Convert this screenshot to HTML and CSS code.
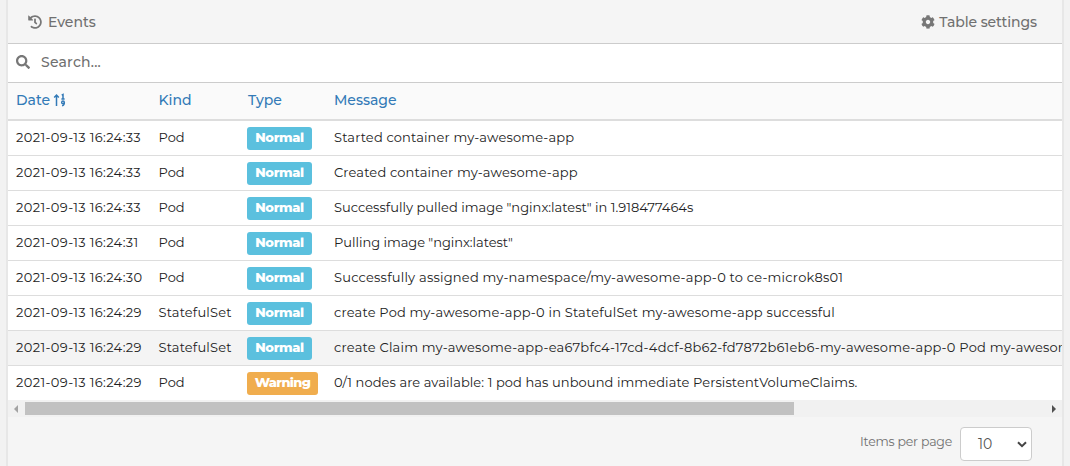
FILE: index.html
```html
<!DOCTYPE html>
<html lang="en">
<head>
<meta charset="utf-8">
<title>Events</title>
<link rel="stylesheet" href="styles.css">
</head>
<body>
<main class="panel">
  <header class="panel-header">
    <div class="title"><svg class="icon" viewBox="0 0 512 512"><path d="M504 255.531c.253 136.64-111.18 248.372-247.82 248.468-59.015.042-113.223-20.53-155.822-54.911-11.077-8.94-11.905-25.541-1.839-35.607l11.267-11.267c8.609-8.609 22.353-9.551 31.891-1.984C173.062 425.135 212.781 440 256 440c101.705 0 184-82.311 184-184 0-101.705-82.311-184-184-184-48.814 0-93.149 18.969-126.068 49.932l50.754 50.754c10.08 10.08 2.941 27.314-11.313 27.314H24c-8.837 0-16-7.163-16-16V38.627c0-14.254 17.234-21.393 27.314-11.314l49.372 49.372C129.209 34.136 189.552 8 256 8c136.81 0 247.747 110.78 248 247.531zm-180.912 78.784l9.823-12.63c8.138-10.463 6.253-25.542-4.21-33.679L288 256.349V152c0-13.255-10.745-24-24-24h-16c-13.255 0-24 10.745-24 24v135.651l65.409 50.874c10.463 8.137 25.541 6.253 33.679-4.21z"/></svg><span class="title-text">Events</span></div>
    <div class="settings"><svg class="icon" viewBox="0 0 512 512"><path d="M487.4 315.7l-42.6-24.6c4.3-23.2 4.3-47 0-70.2l42.6-24.6c4.9-2.8 7.1-8.6 5.5-14-11.1-35.6-30-67.8-54.7-94.6-3.8-4.1-10-5.1-14.8-2.3L380.8 110c-17.9-15.4-38.5-27.3-60.8-35.1V25.8c0-5.6-3.9-10.5-9.4-11.7-36.7-8.2-74.3-7.8-109.2 0-5.5 1.2-9.4 6.1-9.4 11.7V75c-22.2 7.9-42.8 19.8-60.8 35.1L88.7 85.5c-4.9-2.8-11-1.9-14.8 2.3-24.7 26.7-43.6 58.9-54.7 94.6-1.7 5.4.6 11.2 5.5 14L67.3 221c-4.3 23.2-4.3 47 0 70.2l-42.6 24.6c-4.9 2.8-7.1 8.6-5.5 14 11.1 35.6 30 67.8 54.7 94.6 3.8 4.1 10 5.1 14.8 2.3l42.6-24.6c17.9 15.4 38.5 27.3 60.8 35.1v49.2c0 5.6 3.9 10.5 9.4 11.7 36.7 8.2 74.3 7.8 109.2 0 5.5-1.2 9.4-6.1 9.4-11.7v-49.2c22.2-7.9 42.8-19.8 60.8-35.1l42.6 24.6c4.9 2.8 11 1.9 14.8-2.3 24.7-26.7 43.6-58.9 54.7-94.6 1.5-5.5-.7-11.3-5.6-14.1zM256 336c-44.1 0-80-35.9-80-80s35.9-80 80-80 80 35.9 80 80-35.9 80-80 80z"/></svg><span class="settings-text">Table settings</span></div>
  </header>
  <div class="search"><svg class="icon" viewBox="0 0 512 512"><path d="M505 442.7L405.3 343c-4.5-4.5-10.6-7-17-7H372c27.6-35.3 44-79.7 44-128C416 93.1 322.9 0 208 0S0 93.1 0 208s93.1 208 208 208c48.3 0 92.7-16.4 128-44v16.3c0 6.4 2.5 12.5 7 17l99.7 99.7c9.4 9.4 24.6 9.4 33.9 0l28.3-28.3c9.4-9.4 9.4-24.6.1-34zM208 336c-70.7 0-128-57.2-128-128 0-70.7 57.2-128 128-128 70.7 0 128 57.2 128 128 0 70.7-57.2 128-128 128z"/></svg><span class="search-text">Search...</span></div>
  <section class="table">
    <div class="row head">
      <span class="sorted"><span class="h-date">Date</span><svg class="sort" viewBox="0 0 13 14"><path d="M3.5 13V2M1.2 4.4L3.5 2l2.3 2.4M8.7 2.2L10 1.5V6M8.4 6h3.2"/><circle cx="10" cy="9.4" r="1.3"/><path d="M11.3 9.4q.2 2.8-2.2 3.5"/></svg></span>
      <span class="h-kind">Kind</span><span class="h-type">Type</span><span class="h-message">Message</span>
    </div>
    <div class="row"><span class="date">2021-09-13 16:24:33</span><span class="pod">Pod</span><span class="badge"><b>Normal</b></span><span class="m1">Started container my-awesome-app</span></div>
    <div class="row"><span class="date">2021-09-13 16:24:33</span><span class="pod">Pod</span><span class="badge"><b>Normal</b></span><span class="m2">Created container my-awesome-app</span></div>
    <div class="row"><span class="date">2021-09-13 16:24:33</span><span class="pod">Pod</span><span class="badge"><b>Normal</b></span><span class="m3">Successfully pulled image "nginx:latest" in 1.918477464s</span></div>
    <div class="row"><span class="date">2021-09-13 16:24:31</span><span class="pod">Pod</span><span class="badge"><b>Normal</b></span><span class="m4">Pulling image "nginx:latest"</span></div>
    <div class="row"><span class="date">2021-09-13 16:24:30</span><span class="pod">Pod</span><span class="badge"><b>Normal</b></span><span class="m5">Successfully assigned my-namespace/my-awesome-app-0 to ce-microk8s01</span></div>
    <div class="row"><span class="date">2021-09-13 16:24:29</span><span class="set">StatefulSet</span><span class="badge"><b>Normal</b></span><span class="m6">create Pod my-awesome-app-0 in StatefulSet my-awesome-app successful</span></div>
    <div class="row hover"><span class="date">2021-09-13 16:24:29</span><span class="set">StatefulSet</span><span class="badge"><b>Normal</b></span><span class="m7">create Claim my-awesome-app-ea67bfc4-17cd-4dcf-8b62-fd7872b61eb6-my-awesome-app-0 Pod my-awesome</span></div>
    <div class="row last"><span class="date">2021-09-13 16:24:29</span><span class="pod">Pod</span><span class="badge warning"><b>Warning</b></span><span class="m8">0/1 nodes are available: 1 pod has unbound immediate PersistentVolumeClaims.</span></div>
  </section>
  <div class="scrollbar"><svg class="arrow left" viewBox="0 0 4 8"><path d="M4 0v8L0 4z"/></svg><div class="track"><div class="thumb"></div></div><svg class="arrow" viewBox="0 0 4 8"><path d="M0 0v8l4-4z"/></svg></div>
  <footer class="pager"><span class="pager-text">Items per page</span><div class="select"><span class="ten">10</span><svg class="chevron" viewBox="0 0 10 7"><path d="M1 1.2l4 4 4-4"/></svg></div></footer>
</main>
</body>
</html>
```
FILE: styles.css
```css
* { box-sizing: border-box; }
body {
  margin: 0;
  height: 466px;
  overflow: hidden;
  padding: 0 6px;
  background: #f2f2f2;
  color: #222;
  font: 13px/20px Montserrat, Inter, "Liberation Sans", sans-serif;
}
.panel {
  width: 1058px;
  height: 466px;
  border: solid #e7e7e7;
  border-width: 0 2px;
  background: #f5f5f5;
  overflow: hidden;
}
svg { display: block; flex: none; }
.icon { width: 14px; height: 14px; fill: #777; }
.panel-header {
  height: 44px;
  display: flex;
  justify-content: space-between;
  align-items: center;
  padding: 0 25px 0 20px;
  border-bottom: 1px solid #ccc;
  color: #707070;
  font-size: 14px;
  font-weight: 500;
}
.title, .settings { display: flex; align-items: center; }
.title { gap: 6px; }
.settings { gap: 4px; }
.settings-text { letter-spacing: -0.1px; }
.search {
  height: 39px;
  display: flex;
  align-items: center;
  gap: 11px;
  padding: 0 0 2px 8px;
  border-bottom: 1px solid #ccc;
  background: #fff;
  color: #707070;
  font-size: 14px;
  font-weight: 500;
}
.search-text { letter-spacing: 0.22px; }
.row {
  height: 35px;
  display: grid;
  grid-template-columns: 142.5px 88.5px 87px 1fr;
  align-items: center;
  padding-left: 8px;
  border-bottom: 1px solid #ddd;
  background: #fff;
  white-space: nowrap;
  overflow: hidden;
}
.row > span { justify-self: start; }
.row > span:not(.badge) { padding-bottom: 2px; }
.head {
  height: 38px;
  border-bottom: 2px solid #ddd;
  background: #fafafa;
  color: #337ab7;
  font-size: 14px;
  font-weight: 500;
}
.hover { background: #f4f4f4; }
.last { height: 34px; border: 0; }
.date { letter-spacing: 0.35px; }
.set { letter-spacing: 0.16px; }
.m1, .m2 { letter-spacing: 0.15px; }
.m3 { letter-spacing: 0.02px; }
.m4 { letter-spacing: -0.03px; }
.m5 { letter-spacing: 0.215px; }
.m6 { letter-spacing: 0.185px; }
.m7 { letter-spacing: 0.21px; }
.m8 { letter-spacing: 0.085px; }
.h-type { padding-left: 1px; letter-spacing: -0.1px; }
.sorted { display: flex; align-items: center; gap: 3px; }
.sort { width: 13px; height: 14px; fill: none; stroke: #337ab7; stroke-width: 1.5; }
.badge {
  height: 23px;
  width: 65px;
  margin-top: 1px;
  border-radius: 3px;
  background: #5bc0de;
  color: #fff;
  line-height: 21px;
  text-align: center;
}
.badge b { font-weight: 800; letter-spacing: -0.35px; }
.warning { width: 71px; background: #f0ad4e; }
.warning b { letter-spacing: -0.65px; }
.scrollbar {
  height: 17px;
  display: flex;
  align-items: center;
  padding: 0 6px;
  background: #f1f1f1;
}
.arrow { width: 4px; height: 8px; fill: #505050; }
.left { fill: #a3a3a3; }
.track { flex: 1; padding-left: 7px; }
.thumb { width: 769px; height: 13px; background: #c1c1c1; }
.pager {
  height: 49px;
  display: flex;
  justify-content: flex-end;
  align-items: flex-start;
  gap: 8px;
  padding: 10px 30px 0 0;
  color: #707070;
}
.pager-text { padding-top: 5px; font-size: 12.5px; letter-spacing: -0.22px; }
.select {
  width: 72px;
  height: 34px;
  display: flex;
  align-items: center;
  justify-content: space-between;
  padding: 0 4px 0 17px;
  border: 1px solid #ccc;
  border-radius: 4px;
  background: #fff;
  color: #555;
  font-size: 14px;
}
.chevron { width: 10px; height: 7px; fill: none; stroke: #444; stroke-width: 2; }
```
